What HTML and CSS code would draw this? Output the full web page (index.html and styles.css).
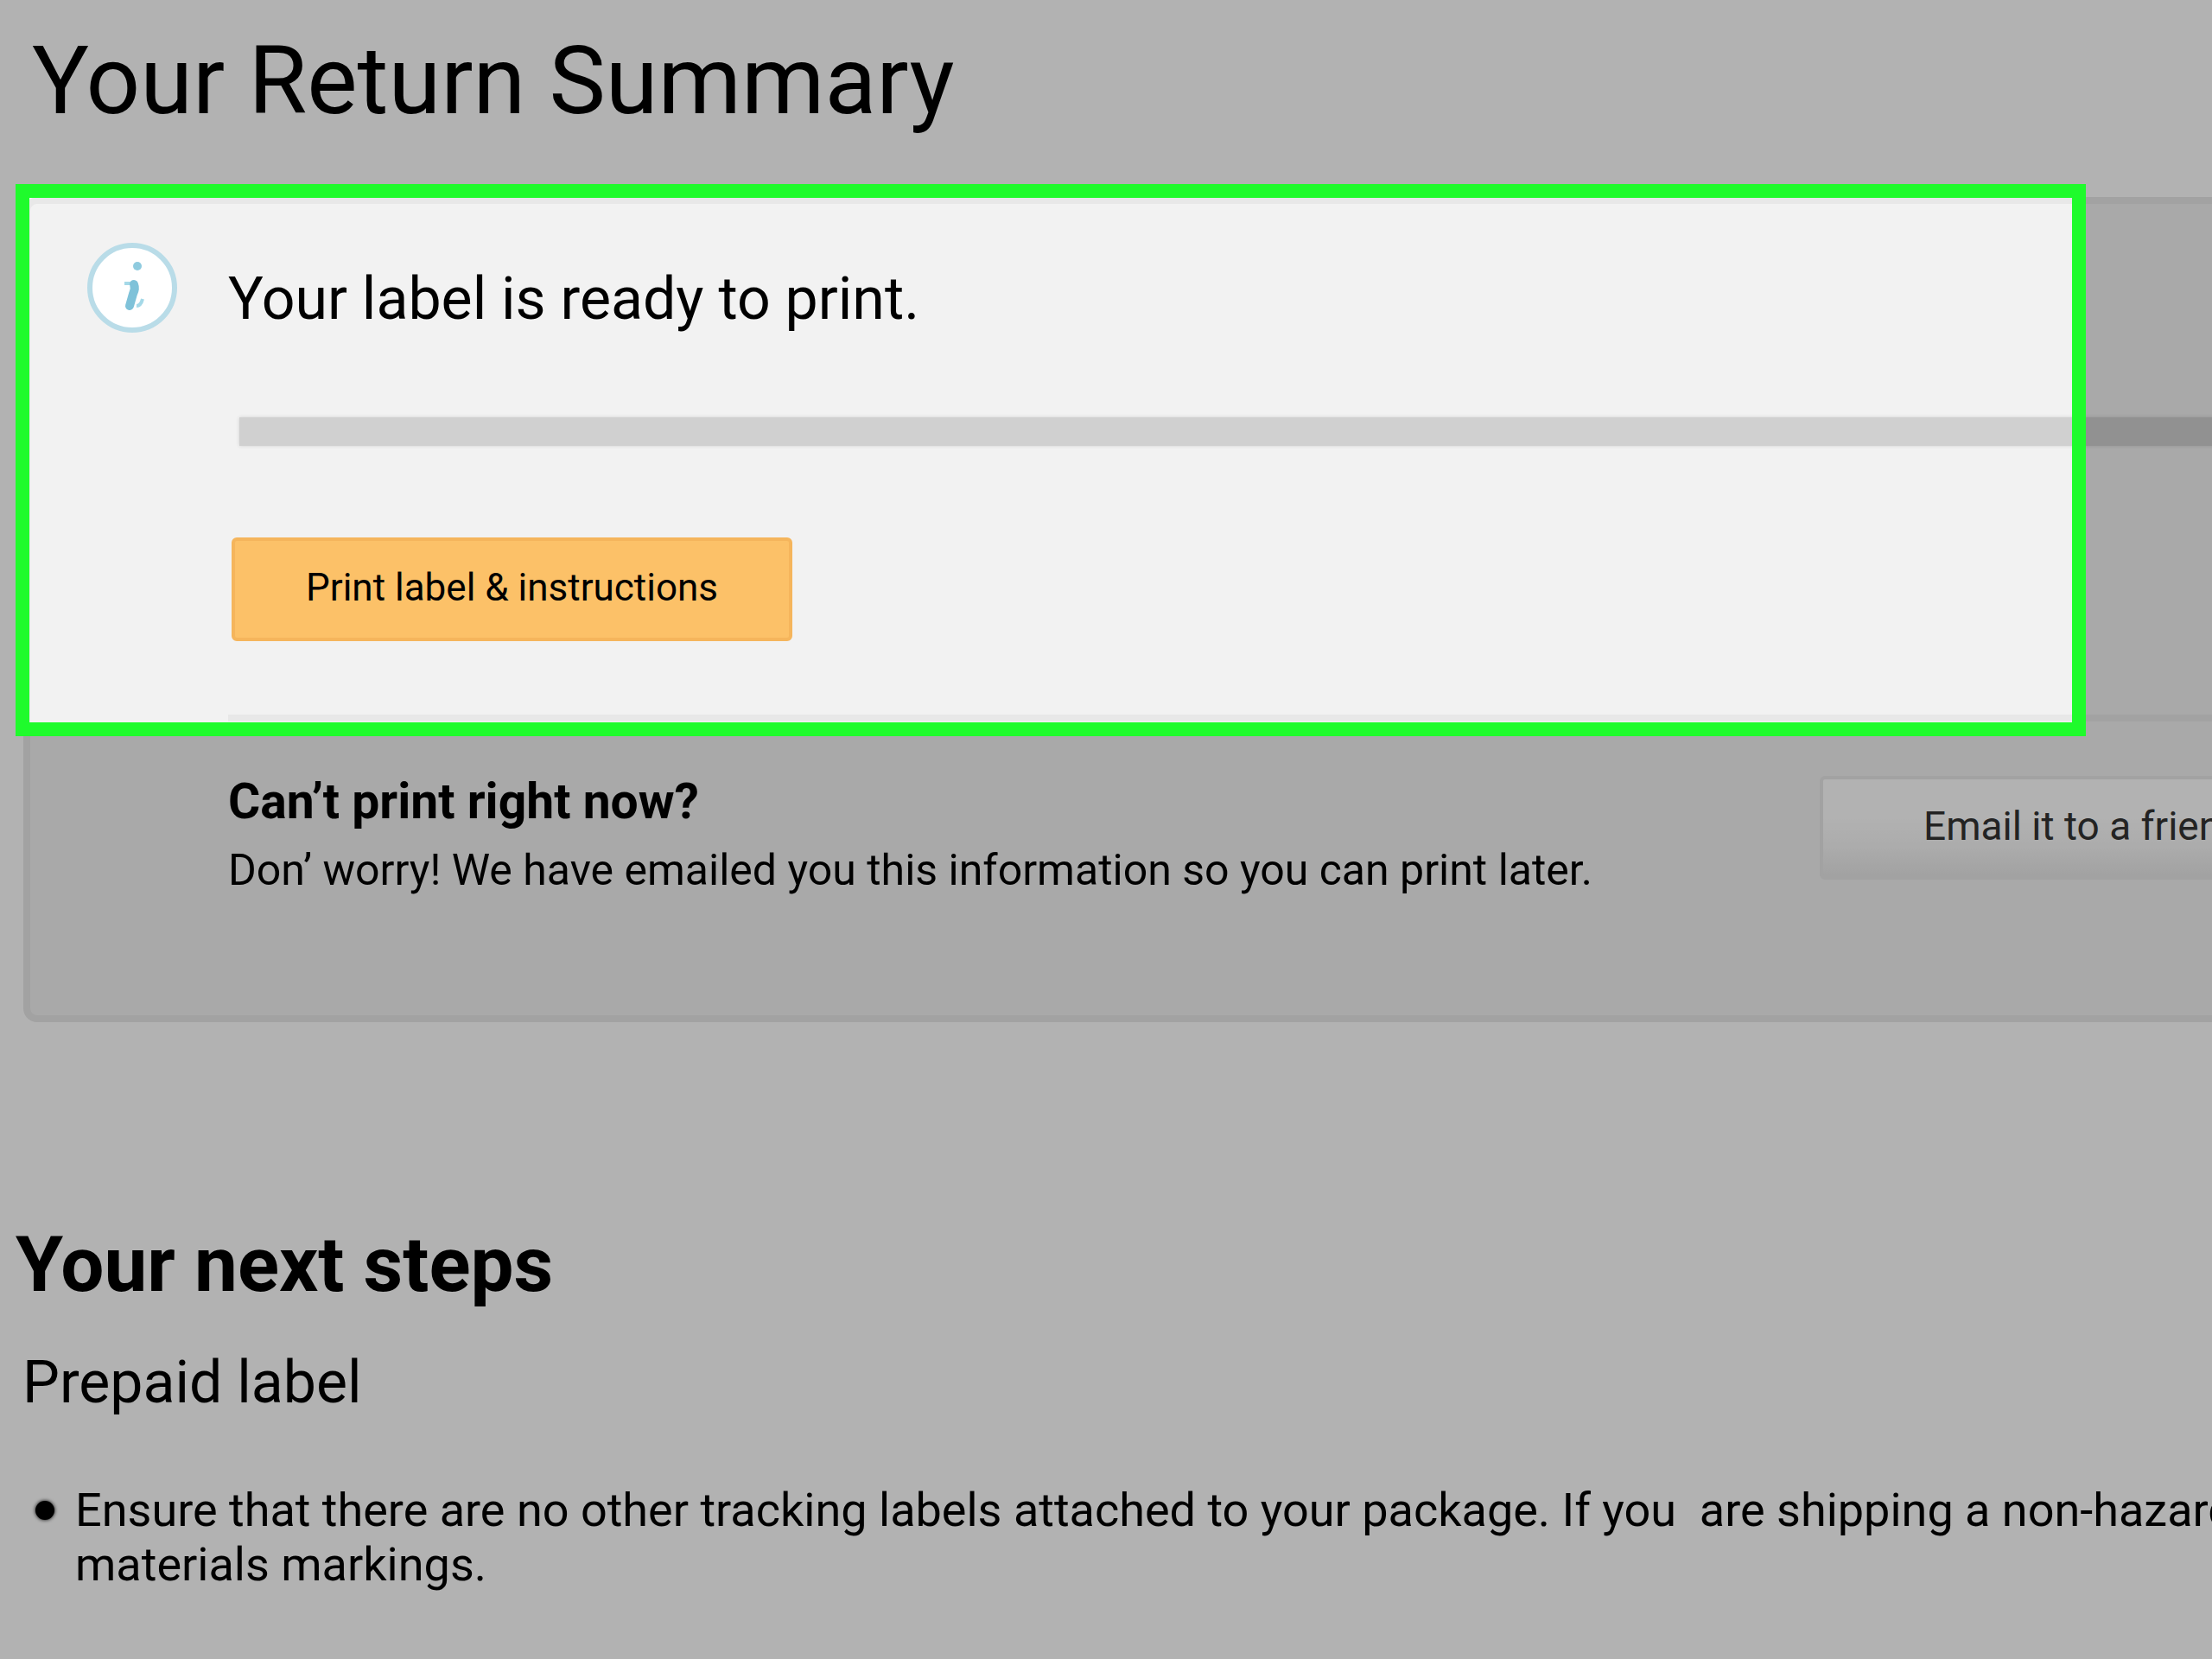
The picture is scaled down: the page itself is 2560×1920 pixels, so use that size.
FILE: index.html
```html
<!DOCTYPE html>
<html lang="en">
<head>
    <meta charset="UTF-8">
    <meta name="viewport" content="width=device-width, initial-scale=1.0">
    <title>Your Return Summary</title>
    <link rel="stylesheet" href="styles.css">
</head>
<body>
    <h1 class="title">Your Return Summary</h1>

    <section class="panel">
        <svg class="info" viewBox="0 0 106 106" aria-hidden="true">
            <circle cx="53" cy="53" r="49" fill="#fff" stroke="#b9dce8" stroke-width="6"/>
            <circle cx="59" cy="28" r="5" fill="#8fcbdf"/>
            <path d="M44 48h12M58 74q5 0 7-8" fill="none" stroke="#a5d9e8" stroke-width="4"/>
            <path d="M55 49q2 5-1 11l-4 14" fill="none" stroke="#7fc2d9" stroke-width="10" stroke-linecap="round"/>
        </svg>
        <div class="content">
            <h2 class="ready">Your label is ready to print.</h2>
            <div class="bar"></div>
            <button class="btn print" type="button">Print label &amp; instructions</button>
            <div class="later">
                <div class="later-text">
                    <h3>Can’t print right now?</h3>
                    <p>Don’ worry! We have emailed you this information so you can print later.</p>
                </div>
                <button class="btn email" type="button">Email it to a friend</button>
            </div>
        </div>
        <div class="spotlight"></div>
    </section>

    <section class="steps">
        <h2>Your next steps</h2>
        <h3>Prepaid label</h3>
        <ul>
            <li>Ensure that there are no other tracking labels attached to your package. If you  are shipping a non-hazardous<br>materials markings.</li>
        </ul>
    </section>
</body>
</html>
```

FILE: styles.css
```css
html,body,h1,h2,h3,p,ul{margin:0; padding:0;}
html{overflow: hidden;}
body{overflow: hidden; min-height: 100vh; background: #fff; color: #000; font-family: Roboto, sans-serif; font-weight: 400;}
h1,h2,h3{font-weight: 400;}

.title{padding: 30px 0 70px 37px; font-size: 110px; line-height: 128px;}

/* the panel runs past the right edge of the window */
.panel{
    position: relative;
    display: flex;
    gap: 58px;
    margin: 0 -300px 0 27px;
    padding: 44px 94px 136px 65px;
    border: 8px solid #e8e8e8;
    border-radius: 16px;
    background: #f2f2f2;
}
.info{flex: none; width: 106px; height: 106px;}
.content{flex: 1; padding-top: 26px;}
.ready{font-size: 68px; line-height: 80px;}
.bar{height: 33px; margin: 97px -94px 0 13px; background: #d0d0d0; box-shadow: 0 0 4px #d0d0d0;}

.btn{height: 120px; border-radius: 6px; font-family: inherit; font-weight: inherit; color: #000;}
.print{display: block; margin: 106px 0 85px 4px; padding: 0 82px 4px; border: 4px solid #f5b55c; background: #fcc168; font-size: 44px;}

.later{display: flex; align-items: flex-start; justify-content: space-between; border-top: 8px solid #e8e8e8; padding-top: 57px;}
.later h3{margin-bottom: 11px; font-size: 57px; line-height: 72px; font-weight: 700;}
.later p{font-size: 50px; line-height: 64px;}
.email{width: 652px; margin-top: 6px; padding: 0 0 4px 116px; border: 4px solid #e8e8e8; background: linear-gradient(#fff 40%, #f6f6f6 70%, #e8e8e8); color: #333; font-size: 46px; text-align: left;}

/* green frame, everything around it is dimmed */
.spotlight{
    position: absolute;
    top: -23px;
    left: -17px;
    right: 438px;
    height: 607px;
    border: 16px solid #1ffb2c;
    box-shadow: 0 0 0 4000px rgba(0,0,0,.3);
    pointer-events: none;
}

.steps{padding: 229px 0 0 18px;}
.steps h2{margin-bottom: 44px; font-size: 89px; line-height: 104px; font-weight: 700;}
.steps h3{margin: 0 0 76px 8px; font-size: 68px; line-height: 80px;}
.steps ul{list-style: none;}
.steps li{display: flex; gap: 24px; padding-left: 23px; font-size: 54px; line-height: 63px; white-space: pre;}
.steps li::before{content: ""; flex: none; width: 22px; height: 22px; margin-top: 21px; border-radius: 50%; background: #000; box-shadow: 0 0 4px #000;}
```
